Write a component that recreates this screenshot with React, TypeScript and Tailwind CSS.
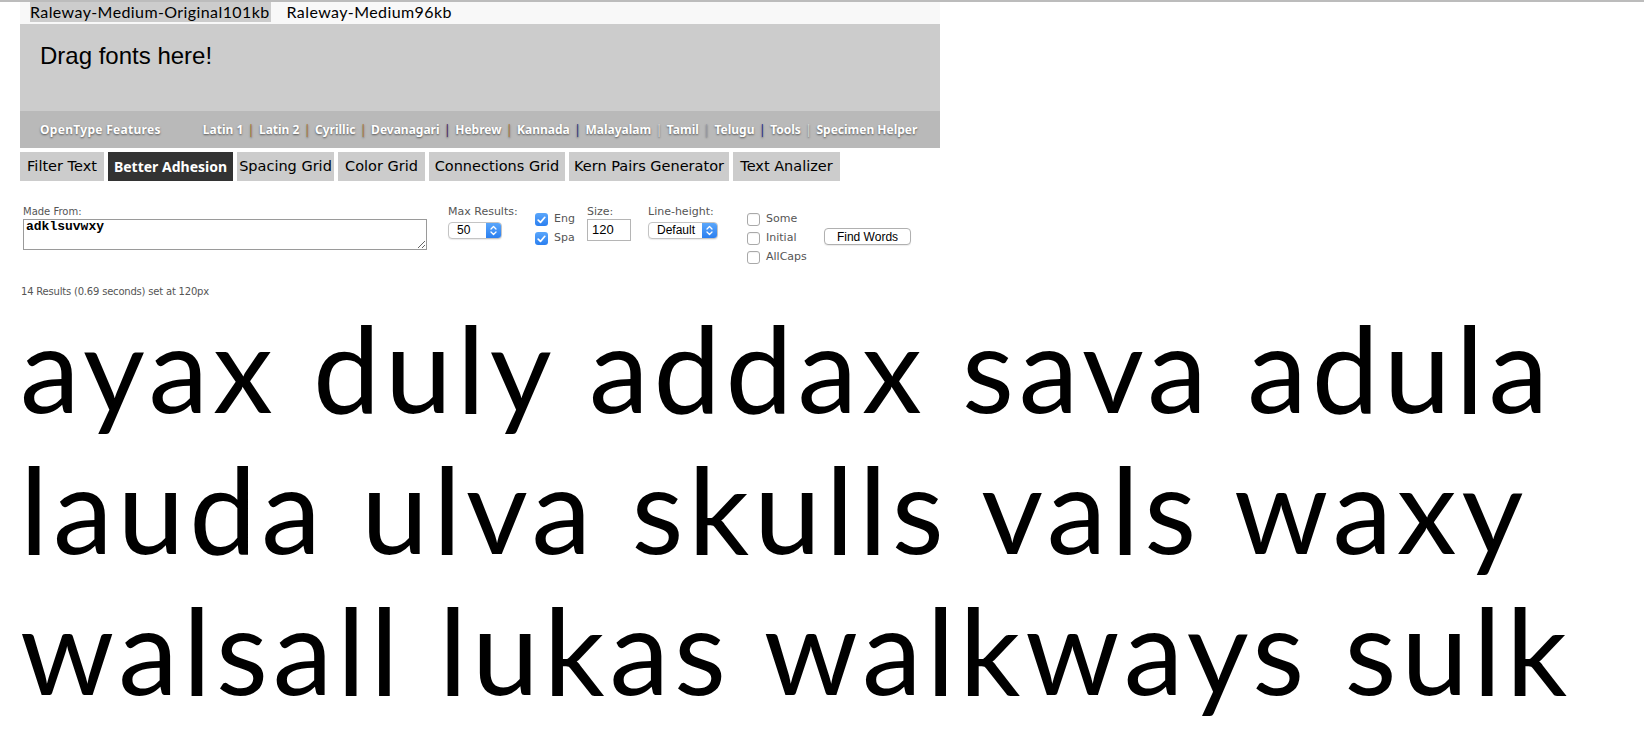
import React from "react";

const links = [
  { name: "Latin 1", sep: "#b0772e" },
  { name: "Latin 2", sep: "#b0772e" },
  { name: "Cyrillic", sep: "#b0772e" },
  { name: "Devanagari", sep: "#4a1f5e" },
  { name: "Hebrew", sep: "#b0772e" },
  { name: "Kannada", sep: "#23327e" },
  { name: "Malayalam", sep: "#d8d8d8" },
  { name: "Tamil", sep: "#9a9aa6" },
  { name: "Telugu", sep: "#23278e" },
  { name: "Tools", sep: "#d8d8d8" },
  { name: "Specimen Helper", sep: "" },
];

// tab widths taken from the screenshot
const tools = [
  { name: "Filter Text", w: "w-[84px]" },
  { name: "Better Adhesion", w: "w-[125px]" },
  { name: "Spacing Grid", w: "w-[97px]" },
  { name: "Color Grid", w: "w-[87px]" },
  { name: "Connections Grid", w: "w-[136px]" },
  { name: "Kern Pairs Generator", w: "w-[160px]" },
  { name: "Text Analizer", w: "w-[107px]" },
];

function Checkbox({ checked, label }: { checked?: boolean; label: string }) {
  return (
    <div className="flex h-[19px] items-start gap-[6px]">
      {checked ? (
        <div className="flex h-[13px] w-[13px] items-center justify-center rounded-[3px] bg-gradient-to-b from-[#5aa6fb] to-[#2a7ff0]">
          <svg width="9" height="8" viewBox="0 0 9 8">
            <path d="M1.2 4.2 L3.5 6.4 L7.8 1.3" fill="none" stroke="white" strokeWidth="1.7" strokeLinecap="round" strokeLinejoin="round" />
          </svg>
        </div>
      ) : (
        <div className="h-[13px] w-[13px] rounded-[3px] border border-[#a9a9a9] bg-white shadow-[inset_0_1px_1px_rgba(0,0,0,0.05)]" />
      )}
      <span className="-mt-[1px] text-[11px] leading-[14px] text-[#555]">{label}</span>
    </div>
  );
}

function Select({ value, width }: { value: string; width: string }) {
  return (
    <div className={`flex h-[17px] ${width} overflow-hidden rounded-[4px] border border-[#c4c4c4] bg-white shadow-[0_1px_1px_rgba(0,0,0,0.08)]`}>
      <div className="flex-1 pl-[8px] font-['Liberation_Sans',sans-serif] text-[12px] leading-[15px] text-black">{value}</div>
      <div className="flex w-[15px] items-center justify-center bg-gradient-to-b from-[#5aa6fb] to-[#2a7ff0]">
        <svg width="7" height="11" viewBox="0 0 7 11">
          <path d="M1 4 L3.5 1.5 L6 4 M1 7 L3.5 9.5 L6 7" fill="none" stroke="white" strokeWidth="1.3" strokeLinecap="round" strokeLinejoin="round" />
        </svg>
      </div>
    </div>
  );
}

export default function App() {
  return (
    <div className="min-h-screen border-t-2 border-[#bcbcbc] bg-white font-['DejaVu_Sans',sans-serif]">
      <div className="ml-[20px] w-[920px]">
        <div className="flex h-[22px] items-start bg-[#f8f8f8] pl-[10px] font-['Lato',sans-serif] text-[16px] leading-[20px] tracking-[0.4px] text-black">
          <span className="bg-[#cccccc] pr-[1px]">Raleway-Medium-Original101kb</span>
          <span className="ml-[16px]">Raleway-Medium96kb</span>
        </div>
        <div className="h-[87px] bg-[#cccccc] pl-[20px] pt-[20px]">
          <div className="font-['Liberation_Sans',sans-serif] text-[24px] leading-[24px] text-black">Drag fonts here!</div>
        </div>
        <div className="flex h-[37px] items-center bg-[#b9b9b9] pl-[20px] font-['Noto_Sans',sans-serif] text-[12px] font-bold text-white [text-shadow:0_1px_2px_rgba(0,0,0,0.55)]">
          <span className="tracking-[0.3px]">OpenType Features</span>
          <div className="ml-[42px] flex items-center">
            {links.map((l) => (
              <span key={l.name} className="flex items-center">
                <span>{l.name}</span>
                {l.sep && (
                  <span className="mx-[4.5px] font-normal" style={{ color: l.sep }}>
                    |
                  </span>
                )}
              </span>
            ))}
          </div>
        </div>
      </div>

      <div className="ml-[20px] mt-[4px] flex gap-[4px]">
        {tools.map((t) =>
          t.name === "Better Adhesion" ? (
            <div key={t.name} className={`flex h-[29px] ${t.w} items-center justify-center bg-[#333333] font-['Noto_Sans',sans-serif] text-[14px] font-bold text-white`}>
              {t.name}
            </div>
          ) : (
            <div key={t.name} className={`flex h-[29px] ${t.w} items-center justify-center whitespace-nowrap bg-[#cccccc] text-[14.5px] text-black`}>
              {t.name}
            </div>
          )
        )}
      </div>

      <div className="mt-[24px] flex h-[66px] items-start pl-[23px] text-[#555]">
        <div className="w-[425px]">
          <div className="text-[10px] leading-[14px]">Made From:</div>
          <textarea
            defaultValue="adklsuvwxy"
            className="block h-[31px] w-[404px] border border-[#9a9a9a] px-[2px] py-0 font-['Liberation_Mono',monospace] text-[13px] font-bold leading-[14px] text-black outline-none"
          />
        </div>
        <div className="w-[87px]">
          <div className="text-[11px] leading-[14px]">Max Results:</div>
          <div className="mt-[3px]">
            <Select value="50" width="w-[54px]" />
          </div>
        </div>
        <div className="w-[52px] pt-[8px]">
          <Checkbox checked label="Eng" />
          <Checkbox checked label="Spa" />
        </div>
        <div className="w-[61px]">
          <div className="text-[11px] leading-[14px]">Size:</div>
          <div className="flex h-[22px] w-[44px] items-center border border-[#b5b5b5] bg-white pl-[4px] font-['Liberation_Sans',sans-serif] text-[13px] text-black">
            120
          </div>
        </div>
        <div className="w-[99px]">
          <div className="text-[11px] leading-[14px]">Line-height:</div>
          <div className="mt-[3px]">
            <Select value="Default" width="w-[70px]" />
          </div>
        </div>
        <div className="w-[77px] pt-[8px]">
          <Checkbox label="Some" />
          <Checkbox label="Initial" />
          <Checkbox label="AllCaps" />
        </div>
        <div className="pt-[23px]">
          <button className="flex h-[17px] w-[87px] items-center justify-center rounded-[4px] border border-[#b0b0b0] bg-white font-['Liberation_Sans',sans-serif] text-[12px] leading-none text-black shadow-[0_1px_1px_rgba(0,0,0,0.08)]">
            Find Words
          </button>
        </div>
      </div>

      <div className="ml-[21px] mt-[16px] text-[10px] leading-[10px] tracking-[-0.2px] text-[#555]">14 Results (0.69 seconds) set at 120px</div>

      <div className="ml-[20px] whitespace-nowrap font-['Lato',sans-serif] text-[120px] font-normal leading-[141px] tracking-[4.8px] text-black">
        <div>ayax duly addax sava adula</div>
        <div>lauda ulva skulls vals waxy</div>
        <div>walsall lukas walkways sulk</div>
      </div>
    </div>
  );
}
